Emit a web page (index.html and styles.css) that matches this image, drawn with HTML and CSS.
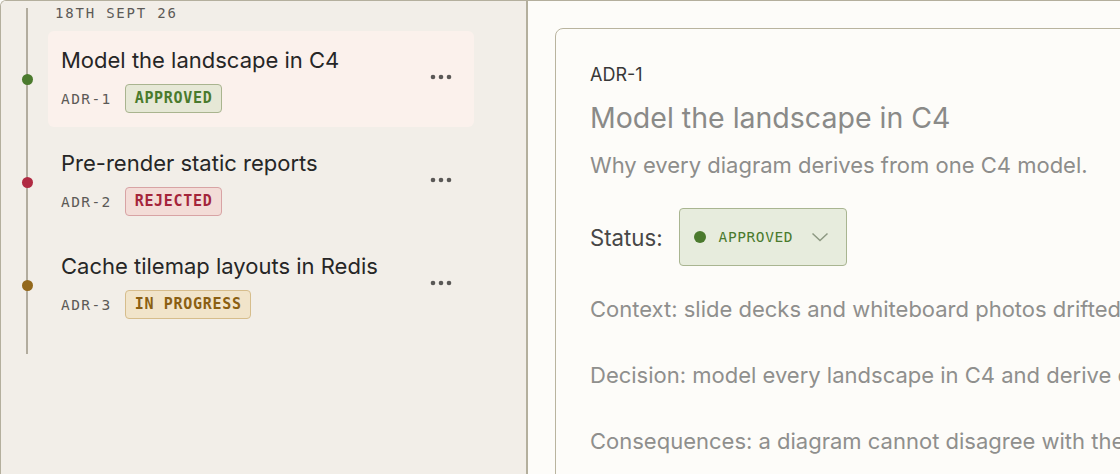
FILE: index.html
```html
<!DOCTYPE html>
<html lang="en">
<head>
    <meta charset="UTF-8">
    <meta name="viewport" content="width=device-width, initial-scale=1.0">
    <title>Decision Records</title>
    <link rel="stylesheet" href="styles.css">
</head>
<body>
    <div class="app">
        <aside class="sidebar">
            <div class="row date-row">
                <div class="rail"></div>
                <div class="date">18TH SEPT 26</div>
            </div>

            <div class="row">
                <div class="rail"><span class="dot dot-approved"></span></div>
                <div class="entry active">
                    <div class="entry-main">
                        <div class="entry-title">Model the landscape in C4</div>
                        <div class="entry-meta">
                            <span class="adr-id">ADR-1</span>
                            <span class="badge badge-approved">APPROVED</span>
                        </div>
                    </div>
                    <svg class="more" width="22" height="6" viewBox="0 0 22 6"><circle cx="3" cy="3" r="2.3"/><circle cx="11" cy="3" r="2.3"/><circle cx="19" cy="3" r="2.3"/></svg>
                </div>
            </div>

            <div class="row">
                <div class="rail"><span class="dot dot-rejected"></span></div>
                <div class="entry">
                    <div class="entry-main">
                        <div class="entry-title">Pre-render static reports</div>
                        <div class="entry-meta">
                            <span class="adr-id">ADR-2</span>
                            <span class="badge badge-rejected">REJECTED</span>
                        </div>
                    </div>
                    <svg class="more" width="22" height="6" viewBox="0 0 22 6"><circle cx="3" cy="3" r="2.3"/><circle cx="11" cy="3" r="2.3"/><circle cx="19" cy="3" r="2.3"/></svg>
                </div>
            </div>

            <div class="row">
                <div class="rail"><span class="dot dot-progress"></span></div>
                <div class="entry">
                    <div class="entry-main">
                        <div class="entry-title">Cache tilemap layouts in Redis</div>
                        <div class="entry-meta">
                            <span class="adr-id">ADR-3</span>
                            <span class="badge badge-progress">IN PROGRESS</span>
                        </div>
                    </div>
                    <svg class="more" width="22" height="6" viewBox="0 0 22 6"><circle cx="3" cy="3" r="2.3"/><circle cx="11" cy="3" r="2.3"/><circle cx="19" cy="3" r="2.3"/></svg>
                </div>
            </div>

            <div class="row tail-row">
                <div class="rail"></div>
            </div>
        </aside>

        <main class="detail">
            <section class="card">
                <div class="card-id">ADR-1</div>
                <h1 class="card-title">Model the landscape in C4</h1>
                <p class="card-sub">Why every diagram derives from one C4 model.</p>

                <div class="status-row">
                    <span class="status-label">Status:</span>
                    <div class="status-select">
                        <span class="status-dot"></span>
                        <span class="status-text">APPROVED</span>
                        <svg class="chevron" width="18" height="10" viewBox="0 0 18 10"><polyline points="1.5,1.5 9,8.5 16.5,1.5"/></svg>
                    </div>
                </div>

                <p class="section first">Context: slide decks and whiteboard photos drifted apart from the code.</p>
                <p class="section">Decision: model every landscape in C4 and derive each diagram from it.</p>
                <p class="section">Consequences: a diagram cannot disagree with the model it comes from.</p>
            </section>
        </main>
    </div>
</body>
</html>
```

FILE: styles.css
```css
html, body {
    margin: 0;
    height: 100%;
}
body {
    font-family: Inter, "Noto Sans", sans-serif;
    background: #fdfcf9;
    overflow: hidden;
}
.app {
    display: flex;
    height: 100vh;
    border-top: 1.5px solid #b4af9d;
    border-left: 1.5px solid #b4af9d;
    border-top-left-radius: 6px;
    box-sizing: border-box;
    overflow: hidden;
}

/* left list */
.sidebar {
    width: 525px;
    flex-shrink: 0;
    background: #f2eee8;
    border-right: 2px solid #b4af9d;
}
.row {
    display: flex;
    margin-bottom: 7px;
}
.rail {
    width: 47px;
    flex-shrink: 0;
    display: flex;
    align-items: center;
    background: linear-gradient(#b2ac9e, #b2ac9e) no-repeat 25px 0 / 2px 100%;
}
.row + .row .rail {
    margin-top: -7px;
    padding-top: 7px;
}
.date-row {
    height: 30px;
    margin-bottom: 0;
}
.date-row .rail {
    background-position: 25px 7px;
}
.date {
    font-family: "DejaVu Sans Mono", monospace;
    font-size: 14px;
    letter-spacing: 1.8px;
    color: #5c5a57;
    margin-left: 7px;
    margin-top: 4px;
}
.tail-row {
    height: 14px;
}
.dot {
    width: 11px;
    height: 11px;
    border-radius: 50%;
    margin-left: 21px;
}
.dot-approved { background: #4b7a2e; }
.dot-rejected { background: #b02a42; }
.dot-progress { background: #93681c; }

.entry {
    width: 426px;
    height: 96px;
    box-sizing: border-box;
    padding: 15px 22px 14px 13px;
    border-radius: 6px;
    display: flex;
    align-items: center;
    justify-content: space-between;
}
.entry.active {
    background: #fbf1ec;
}
.entry-main {
    align-self: flex-start;
}
.entry-title {
    font-size: 22px;
    line-height: 28px;
    color: #262626;
}
.entry-meta {
    display: flex;
    align-items: center;
    gap: 13px;
    margin-top: 10px;
}
.adr-id {
    font-family: "DejaVu Sans Mono", monospace;
    font-size: 14.5px;
    letter-spacing: 1.4px;
    color: #5c5a57;
}
.badge {
    font-family: "DejaVu Sans Mono", monospace;
    font-weight: bold;
    font-size: 15px;
    letter-spacing: 0.7px;
    height: 29px;
    line-height: 27px;
    box-sizing: border-box;
    padding: 0 8px 0 9px;
    border-radius: 4px;
    border: 1px solid;
}
.badge-approved {
    color: #4a7a2d;
    background: #e6e8d6;
    border-color: #a9b48f;
}
.badge-rejected {
    color: #a4243a;
    background: #f3dcd7;
    border-color: #d8a3a4;
}
.badge-progress {
    color: #8b5f12;
    background: #f1e4ca;
    border-color: #d6bd8c;
}
.more {
    fill: #5a5856;
    margin-top: -6px;
}

/* right detail */
.detail {
    flex: 1;
    padding: 27px 0 0 27px;
    overflow: hidden;
}
.card {
    width: 900px;
    height: 600px;
    box-sizing: border-box;
    border: 1.5px solid #b9b49f;
    border-radius: 8px;
    background: #fdfcf9;
    padding: 34px 0 0 34px;
    white-space: nowrap;
}
.card-id {
    font-size: 18px;
    line-height: 24px;
    color: #383838;
}
.card-title {
    font-size: 28.5px;
    line-height: 36px;
    font-weight: normal;
    color: #8a8a88;
    margin: 13px 0 0;
}
.card-sub {
    font-size: 22px;
    line-height: 28px;
    color: #8d8d8b;
    margin: 15px 0 0;
}
.status-row {
    display: flex;
    align-items: center;
    gap: 16px;
    margin-top: 29px;
}
.status-label {
    font-size: 22.2px;
    color: #474747;
}
.status-select {
    width: 168px;
    height: 58px;
    box-sizing: border-box;
    display: flex;
    align-items: center;
    padding: 0 17px 0 14px;
    background: #e7ecdd;
    border: 1.5px solid #a9b591;
    border-radius: 4px;
}
.status-dot {
    width: 12px;
    height: 12px;
    border-radius: 50%;
    background: #4b7a2e;
}
.status-text {
    font-family: "DejaVu Sans Mono", monospace;
    font-size: 14.5px;
    letter-spacing: 0.6px;
    color: #4a7a2d;
    margin-left: 13px;
}
.chevron {
    margin-left: auto;
    fill: none;
    stroke: #8d9982;
    stroke-width: 1.5;
}
.section {
    font-size: 22px;
    line-height: 28px;
    color: #8f8f8d;
    margin: 38px 0 0;
}
.section.first {
    margin-top: 29px;
}
```
